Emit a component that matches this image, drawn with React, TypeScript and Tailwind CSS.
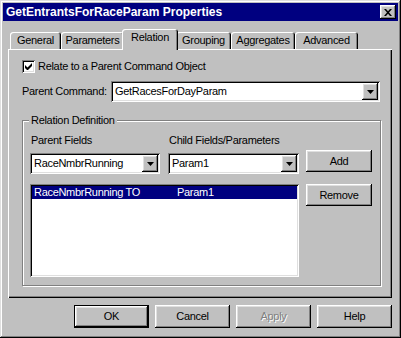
import React from "react";

const bevelBtn =
  "shadow-[inset_-1px_-1px_0_#000,inset_1px_1px_0_#fff,inset_-2px_-2px_0_#808080,inset_2px_2px_0_#dfdfdf]";
const sunken =
  "shadow-[inset_1px_1px_0_#808080,inset_-1px_-1px_0_#fff,inset_2px_2px_0_#000,inset_-2px_-2px_0_#dfdfdf]";

function Arrow() {
  return (
    <svg width="7" height="4" viewBox="0 0 7 4">
      <path d="M0 0H7L3.5 4Z" fill="#000" />
    </svg>
  );
}

function Combo({ value, w }: { value: string; w: string }) {
  return (
    <div className={`${w} h-[21px] bg-white ${sunken} flex items-center p-[2px]`}>
      <div className="flex-1 pl-[2px] truncate">{value}</div>
      <div className={`w-[16px] h-[17px] bg-[#c0c0c0] ${bevelBtn} flex items-center justify-center`}>
        <Arrow />
      </div>
    </div>
  );
}

function Button({ label, cls = "", disabled = false }: { label: string; cls?: string; disabled?: boolean }) {
  return (
    <div className={`${cls} bg-[#c0c0c0] ${bevelBtn} flex items-center justify-center`}>
      <span
        className={
          disabled ? "text-[#808080] [text-shadow:1px_1px_0_#fff]" : "text-black"
        }
      >
        {label}
      </span>
    </div>
  );
}

function Tab({ label, w, selected = false }: { label: string; w: string; selected?: boolean }) {
  if (selected) {
    return (
      <div
        className={`${w} h-[21px] mx-[-2px] mb-[-1px] relative z-10 bg-[#c0c0c0] rounded-t-[3px] pt-[2px] text-center shadow-[inset_1px_1px_0_#fff,inset_-1px_0_0_#000,inset_-2px_0_0_#808080]`}
      >
        {label}
      </div>
    );
  }
  return (
    <div
      className={`${w} h-[17px] bg-[#c0c0c0] rounded-t-[3px] pt-[2px] text-center shadow-[inset_1px_1px_0_#fff,inset_-1px_0_0_#000,inset_-2px_0_0_#808080]`}
    >
      {label}
    </div>
  );
}

export default function App() {
  return (
    <div className="w-[401px] h-[338px] bg-[#c0c0c0] p-[3px] flex flex-col whitespace-nowrap font-['Liberation_Sans',Arial,sans-serif] text-[11px] leading-[13px] tracking-[-0.3px] text-black shadow-[inset_-1px_-1px_0_#000,inset_1px_1px_0_#dfdfdf,inset_-2px_-2px_0_#808080,inset_2px_2px_0_#fff]">
      {/* Title bar */}
      <div className="h-[18px] bg-[#000080] flex items-center justify-between pl-[3px] pr-[2px]">
        <span className="text-white font-bold text-[12px] tracking-normal">GetEntrantsForRaceParam Properties</span>
        <div className={`w-[16px] h-[14px] bg-[#c0c0c0] ${bevelBtn} flex items-center justify-center`}>
          <svg width="8" height="7" viewBox="0 0 8 7">
            <path d="M0 0h2l2 2.3L6 0h2L5 3.5 8 7H6L4 4.7 2 7H0l3-3.5Z" fill="#000" />
          </svg>
        </div>
      </div>

      {/* Tabs */}
      <div className="mt-[8px] ml-[7px] h-[20px] flex items-end">
        <Tab label="General" w="w-[51px]" />
        <Tab label="Parameters" w="w-[63px]" />
        <Tab label="Relation" w="w-[56px]" selected />
        <Tab label="Grouping" w="w-[55px]" />
        <Tab label="Aggregates" w="w-[64px]" />
        <Tab label="Advanced" w="w-[63px]" />
      </div>

      {/* Panel */}
      <div className="ml-[5px] w-[384px] h-[249px] pl-[14px] pt-[11px] flex flex-col shadow-[inset_1px_1px_0_#fff,inset_-1px_-1px_0_#000,inset_-2px_-2px_0_#808080]">
        <div className="flex items-center h-[13px]">
          <div className={`w-[13px] h-[13px] bg-white ${sunken} flex items-center justify-center`}>
            <svg width="7" height="7" viewBox="0 0 7 7">
              <path d="M0 2v3l2 2h1l4-4V0L2.5 4.5Z" fill="#000" />
            </svg>
          </div>
          <span className="ml-[3px]">Relate to a Parent Command Object</span>
        </div>

        <div className="mt-[8px] flex items-center">
          <span className="w-[89px]">Parent Command:</span>
          <Combo value="GetRacesForDayParam" w="w-[269px]" />
        </div>

        {/* Group box */}
        <div className="mt-[18px] w-[359px] h-[166px] relative border border-[#808080] shadow-[inset_1px_1px_0_#fff,1px_1px_0_#fff] pl-[7px] flex">
          <span className="absolute top-[-7px] left-[6px] px-[2px] bg-[#c0c0c0]">Relation Definition</span>
          <div className="w-[269px] pt-[13px] flex flex-col">
            <div className="flex">
              <div className="w-[138px] flex flex-col">
                <span className="pl-[1px]">Parent Fields</span>
                <div className="mt-[6px]">
                  <Combo value="RaceNmbrRunning" w="w-[130px]" />
                </div>
              </div>
              <div className="w-[131px] flex flex-col">
                <span className="pl-[1px]">Child Fields/Parameters</span>
                <div className="mt-[6px]">
                  <Combo value="Param1" w="w-[131px]" />
                </div>
              </div>
            </div>
            <div className={`mt-[10px] w-[269px] h-[93px] bg-white ${sunken} p-[2px]`}>
              <div className="h-[13px] bg-[#000080] text-white flex">
                <span className="w-[145px] pl-[2px]">RaceNmbrRunning TO</span>
                <span>Param1</span>
              </div>
            </div>
          </div>
          <div className="ml-[7px] pt-[29px] flex flex-col">
            <Button label="Add" cls="w-[66px] h-[22px]" />
            <Button label="Remove" cls="w-[66px] h-[22px] mt-[12px]" />
          </div>
        </div>
      </div>

      {/* Bottom buttons */}
      <div className="mt-[7px] mr-[6px] flex justify-end gap-[6px]">
        <div className="w-[75px] h-[23px] border border-black">
          <Button label="OK" cls="w-full h-full" />
        </div>
        <Button label="Cancel" cls="w-[75px] h-[23px]" />
        <Button label="Apply" cls="w-[75px] h-[23px]" disabled />
        <Button label="Help" cls="w-[75px] h-[23px]" />
      </div>
    </div>
  );
}
